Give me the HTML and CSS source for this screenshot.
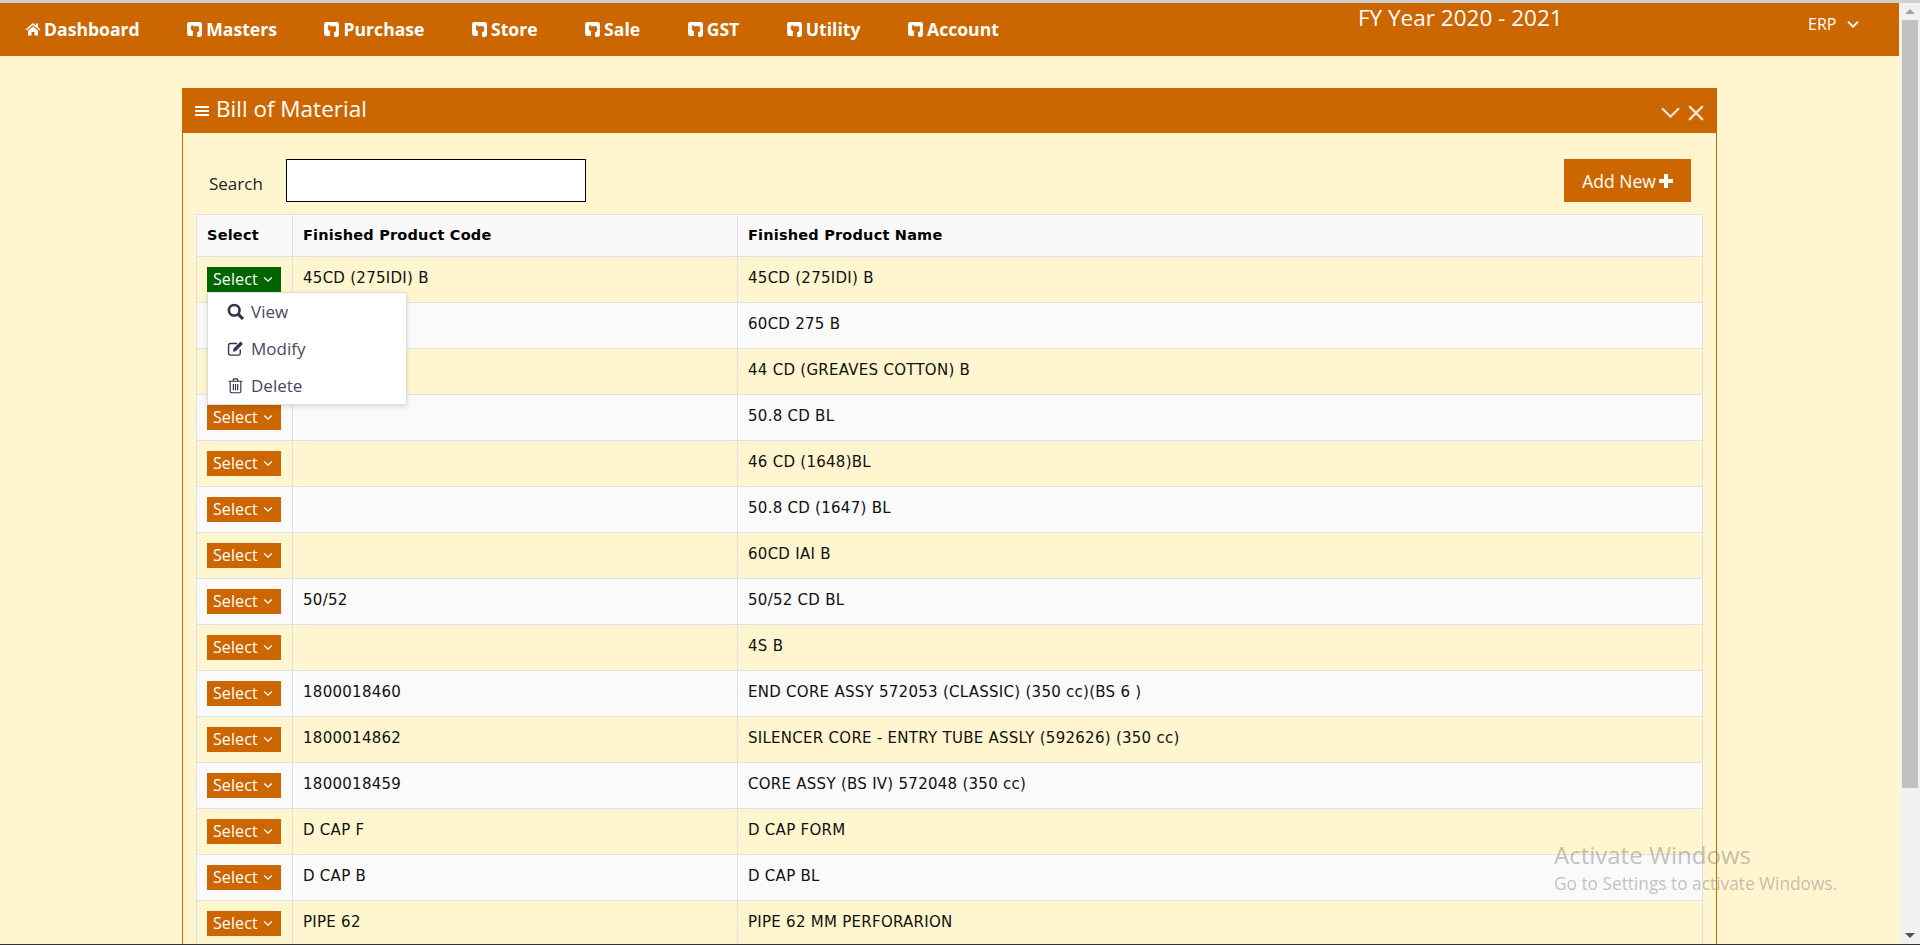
FILE: index.html
```html
<!DOCTYPE html>
<html lang="en">
<head>
<meta charset="utf-8">
<title>Bill of Material</title>
<link rel="stylesheet" href="styles.css">
</head>
<body>
<svg class="sprite" width="0" height="0" aria-hidden="true">
  <symbol id="gh" viewBox="0 0 16 16"><path d="M3 1h10a2 2 0 0 1 2 2v10a2 2 0 0 1-2 2h-2.500v-3c0-.6-.2-1-.5-1.300 1.400-.2 2.500-1 2.500-3 0-.7-.2-1.200-.6-1.700.1-.4.1-1-.1-1.500-.5 0-1.100.3-1.500.6a6 6 0 0 0-3.600 0C6.300 3.800 5.700 3.500 5.200 3.500c-.2.5-.2 1.100-.1 1.500-.4.5-.6 1-.6 1.700 0 2 1.100 2.800 2.500 3-.3.3-.5.7-.5 1.300v3H3a2 2 0 0 1-2-2V3a2 2 0 0 1 2-2z"/></symbol>
  <symbol id="caret" viewBox="0 0 12 8"><path d="M1.500 1.500 6 6l4.500-4.500" fill="none" stroke="currentColor" stroke-width="1.600"/></symbol>
</svg>
<div class="app">
  <div class="viewport">
    <header class="nav">
      <ul class="menu">
        <li class="menu-item menu-first"><svg class="ico ico-home" viewBox="0 0 16 16"><path d="M8 2 .5 8.500l1 1L8 4l6.500 5.500 1-1L13 6.300V2.500h-2v2zM3 9.800V14.500h3.500V11h3v3.500H13V9.800L8 5.500z"/></svg>Dashboard</li>
        <li class="menu-item"><svg class="ico"><use href="#gh"/></svg>Masters</li>
        <li class="menu-item"><svg class="ico"><use href="#gh"/></svg>Purchase</li>
        <li class="menu-item"><svg class="ico"><use href="#gh"/></svg>Store</li>
        <li class="menu-item"><svg class="ico"><use href="#gh"/></svg>Sale</li>
        <li class="menu-item"><svg class="ico"><use href="#gh"/></svg>GST</li>
        <li class="menu-item"><svg class="ico"><use href="#gh"/></svg>Utility</li>
        <li class="menu-item"><svg class="ico"><use href="#gh"/></svg>Account</li>
      </ul>
      <div class="fy">FY Year 2020 - 2021</div>
      <div class="erp">ERP<svg class="erp-caret"><use href="#caret"/></svg></div>
    </header>
    <main class="content">
      <section class="panel">
        <div class="panel-head">
          <h1 class="panel-title"><svg class="bars" viewBox="0 0 14 12"><path d="M0 1h14v2H0zM0 5h14v2H0zM0 9h14v2H0z"/></svg>Bill of Material</h1>
          <div class="panel-tools">
            <svg class="tool-down" viewBox="0 0 18 11"><path d="M1 1l8 8 8-8" fill="none" stroke="currentColor" stroke-width="2"/></svg>
            <svg class="tool-close" viewBox="0 0 14 14"><path d="M1 1l12 12M13 1 1 13" fill="none" stroke="currentColor" stroke-width="2"/></svg>
          </div>
        </div>
        <div class="panel-body">
          <div class="toolbar">
            <label class="search-label">Search</label>
            <input class="search-input" type="text">
            <button class="add-btn">Add New<svg class="plus" viewBox="0 0 14 14"><path d="M5 0h4v5h5v4H9v5H5V9H0V5h5z"/></svg></button>
          </div>
          <table class="grid">
            <colgroup><col class="c1"><col class="c2"><col></colgroup>
            <thead><tr><th>Select</th><th>Finished Product Code</th><th>Finished Product Name</th></tr></thead>
            <tbody>
              <tr><td class="sel-cell"><div class="dropdown"><button class="sel sel-open">Select<svg class="sel-caret"><use href="#caret"/></svg></button>
                <ul class="dd-menu">
                  <li class="dd-item"><svg class="dd-ico" viewBox="0 0 16 16"><circle cx="6.800" cy="6.800" r="5" fill="none" stroke="currentColor" stroke-width="2.400"/><path d="M10.500 10.500 15 15" stroke="currentColor" stroke-width="3" fill="none"/></svg>View</li>
                  <li class="dd-item"><svg class="dd-ico" viewBox="0 0 16 16"><path d="M12.500 9v3.500c0 1-.7 1.700-1.700 1.700H3.200c-1 0-1.700-.7-1.700-1.700V5c0-1 .7-1.700 1.700-1.700h6.300" fill="none" stroke="currentColor" stroke-width="1.300"/><path d="M6 8.300 12.800 1.500l2.200 2.200L8.200 10.500 5.700 11z"/></svg>Modify</li>
                  <li class="dd-item"><svg class="dd-ico" viewBox="0 0 16 16"><path d="M3 4.500v9c0 .8.500 1.300 1.200 1.300h7.600c.7 0 1.200-.5 1.200-1.300v-9M1.500 4h13M5.500 4l.8-2.300h3.400l.8 2.300M6 6.500v6M8 6.500v6M10 6.500v6" fill="none" stroke="currentColor" stroke-width="1.100"/></svg>Delete</li>
                </ul></div></td><td>45CD (275IDI) B</td><td>45CD (275IDI) B</td></tr>
              <tr><td class="sel-cell"><button class="sel">Select<svg class="sel-caret"><use href="#caret"/></svg></button></td><td></td><td>60CD 275 B</td></tr>
              <tr><td class="sel-cell"><button class="sel">Select<svg class="sel-caret"><use href="#caret"/></svg></button></td><td></td><td>44 CD (GREAVES COTTON) B</td></tr>
              <tr><td class="sel-cell"><button class="sel">Select<svg class="sel-caret"><use href="#caret"/></svg></button></td><td></td><td>50.8 CD BL</td></tr>
              <tr><td class="sel-cell"><button class="sel">Select<svg class="sel-caret"><use href="#caret"/></svg></button></td><td></td><td>46 CD (1648)BL</td></tr>
              <tr><td class="sel-cell"><button class="sel">Select<svg class="sel-caret"><use href="#caret"/></svg></button></td><td></td><td>50.8 CD (1647) BL</td></tr>
              <tr><td class="sel-cell"><button class="sel">Select<svg class="sel-caret"><use href="#caret"/></svg></button></td><td></td><td>60CD IAI B</td></tr>
              <tr><td class="sel-cell"><button class="sel">Select<svg class="sel-caret"><use href="#caret"/></svg></button></td><td>50/52</td><td>50/52 CD BL</td></tr>
              <tr><td class="sel-cell"><button class="sel">Select<svg class="sel-caret"><use href="#caret"/></svg></button></td><td></td><td>4S B</td></tr>
              <tr><td class="sel-cell"><button class="sel">Select<svg class="sel-caret"><use href="#caret"/></svg></button></td><td>1800018460</td><td>END CORE ASSY 572053 (CLASSIC) (350 cc)(BS 6 )</td></tr>
              <tr><td class="sel-cell"><button class="sel">Select<svg class="sel-caret"><use href="#caret"/></svg></button></td><td>1800014862</td><td>SILENCER CORE - ENTRY TUBE ASSLY (592626) (350 cc)</td></tr>
              <tr><td class="sel-cell"><button class="sel">Select<svg class="sel-caret"><use href="#caret"/></svg></button></td><td>1800018459</td><td>CORE ASSY (BS IV) 572048 (350 cc)</td></tr>
              <tr><td class="sel-cell"><button class="sel">Select<svg class="sel-caret"><use href="#caret"/></svg></button></td><td>D CAP F</td><td>D CAP FORM</td></tr>
              <tr><td class="sel-cell"><button class="sel">Select<svg class="sel-caret"><use href="#caret"/></svg></button></td><td>D CAP B</td><td>D CAP BL</td></tr>
              <tr><td class="sel-cell"><button class="sel">Select<svg class="sel-caret"><use href="#caret"/></svg></button></td><td>PIPE 62</td><td>PIPE 62 MM PERFORARION</td></tr>
            </tbody>
          </table>
        </div>
      </section>
    </main>
    <div class="watermark">
      <div class="wm-title">Activate Windows</div>
      <div class="wm-sub">Go to Settings to activate Windows.</div>
    </div>
  </div>
  <div class="scrollbar">
    <div class="sb-up"></div>
    <div class="sb-track"><div class="sb-thumb"></div></div>
    <div class="sb-down"></div>
  </div>
</div>
</body>
</html>
```

FILE: styles.css
```css
* { box-sizing: border-box; }
html, body { margin: 0; height: 100%; overflow: hidden; }
body { font-family: "Open Sans", "Noto Sans", sans-serif; background: #fff5cf; color: #212529; }
.sprite { position: absolute; }
.app { display: flex; height: 945px; border-top: 3px solid #cfcfcf; border-bottom: 1px solid #333; }
.viewport { flex: 1; min-width: 0; position: relative; overflow: hidden; }

.nav { height: 53px; background: #cc6600; color: #fff; display: flex; align-items: flex-start; position: relative; }
.menu { list-style: none; margin: 0; padding: 0 0 0 25px; display: flex; gap: 46.5px; }
.menu-item { display: flex; align-items: center; font-size: 17.6px; font-weight: 700; line-height: 20px; padding-top: 16px; }
.ico { width: 17px; height: 17px; fill: #fff; margin-right: 3px; }
.ico-home { width: 16px; height: 16px; }
.fy { position: absolute; left: 1358px; top: 0; font-size: 22.5px; line-height: 30px; }
.erp { position: absolute; left: 1808px; top: 11px; font-size: 16px; line-height: 20px; display: flex; align-items: center; }
.erp-caret { width: 14px; height: 9px; margin-left: 10px; }

.content { padding: 32px 0 0 182px; }
.panel { width: 1535px; border: 1px solid #cc6600; border-top: 0; border-bottom: 0; }
.panel-head { height: 45px; margin: 0 -1px; background: #cc6600; color: #fff; display: flex; align-items: center; justify-content: space-between; padding: 0 13px 0 13px; }
.panel-title { margin: 0 0 3px; font-size: 22.5px; font-weight: 400; display: flex; align-items: center; line-height: 30px; }
.bars { width: 14px; height: 12px; fill: #fff; margin-right: 7px; margin-top: 3px; }
.panel-tools { display: flex; align-items: center; gap: 8px; color: #f2e5d5; padding-top: 5px; }
.tool-down { width: 19px; height: 12px; }
.tool-close { width: 16px; height: 16px; }

.panel-body { padding: 26px 12px 0 13px; }
.toolbar { display: flex; align-items: flex-start; height: 55px; }
.search-label { font-size: 17px; line-height: 24px; padding: 13px 0 0 13px; width: 90px; }
.search-input { width: 300px; height: 43px; border: 1px solid #000; border-radius: 0; background: #fff; }
.add-btn { margin-left: auto; margin-right: 13px; width: 127px; height: 43px; border: 0; background: #cc6600; color: #fff; font: 400 17.5px "Open Sans", sans-serif; display: flex; align-items: center; justify-content: center; padding: 0; }
.plus { width: 14px; height: 14px; fill: #fff; margin-left: 3px; }

.grid { width: 1507px; table-layout: fixed; border-collapse: collapse; font-family: "DejaVu Sans", sans-serif; font-size: 15px; letter-spacing: .27px; color: #111; }
.c1 { width: 96px; }
.c2 { width: 445px; }
.grid th, .grid td { border: 1px solid #dee2e6; padding: 10px; text-align: left; vertical-align: top; line-height: 20px; }
.grid th { background: #f9f9f9; font-size: 14.5px; letter-spacing: .2px; font-weight: 700; height: 42px; color: #000; }
.grid td { height: 46px; padding-top: 11px; }
.grid tbody tr:nth-child(even) { background: #fafafa; }
.grid td.sel-cell { padding: 10px; letter-spacing: 0; }
.dropdown { position: relative; }
.sel { display: flex; align-items: center; width: 74px; height: 25px; border: 0; padding: 0 0 1px 6px; background: #cc6600; color: #fff; font: 400 16px/24px "Open Sans", sans-serif; letter-spacing: .1px; }
.sel-open { background: #006400; }
.sel-caret { width: 10px; height: 7px; margin-left: 5px; }
.dd-menu { list-style: none; margin: 0; padding: 0; position: absolute; left: 0; top: 25px; width: 200px; height: 113px; background: #fff; border: 1px solid #dcdcdc; box-shadow: 0 2px 5px rgba(0,0,0,.12); z-index: 5; font-family: "Open Sans", sans-serif; font-size: 17px; color: #4a4860; }
.dd-item { display: flex; align-items: center; height: 37px; padding-left: 19px; }
.dd-ico { width: 17px; height: 17px; margin-right: 7px; fill: currentColor; color: #33334d; flex: none; }

.watermark { position: absolute; left: 1554px; top: 836px; color: rgba(120,120,120,.45); font-family: "Open Sans", sans-serif; pointer-events: none; z-index: 6; }
.wm-title { font-size: 24px; line-height: 32px; }
.wm-sub { font-size: 17.3px; line-height: 22px; margin-top: 2px; white-space: nowrap; }

.scrollbar { width: 20px; margin-left: 1px; background: #f1f1f1; display: flex; flex-direction: column; }
.sb-up, .sb-down { height: 17px; flex: none; position: relative; }
.sb-up::after, .sb-down::after { content: ""; position: absolute; left: 5px; border-left: 5px solid transparent; border-right: 5px solid transparent; }
.sb-up::after { top: 6px; border-bottom: 5px solid #a3a3a3; }
.sb-down::after { top: 6px; border-top: 5px solid #505050; }
.sb-track { flex: 1; padding: 0 2px; }
.sb-thumb { height: 768px; background: #c1c1c1; }
```
